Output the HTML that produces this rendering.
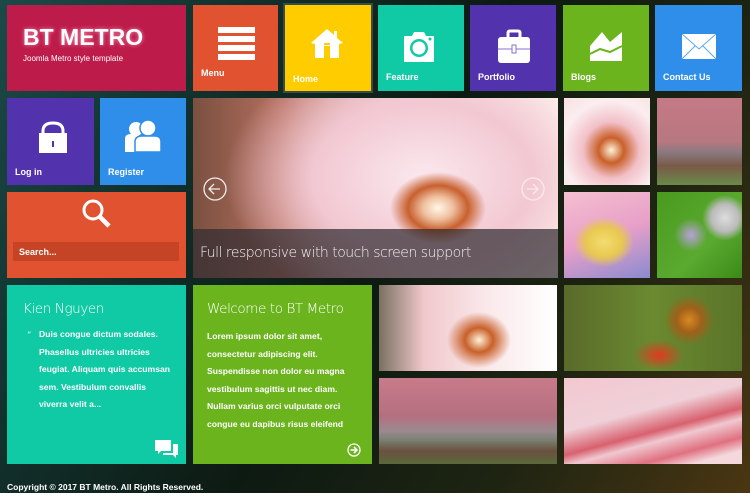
<!DOCTYPE html>
<html><head><meta charset="utf-8"><style>
*{margin:0;padding:0;box-sizing:border-box}
body{width:750px;height:493px;overflow:hidden;position:relative;font-family:"Liberation Sans",sans-serif;color:#fff;
background:linear-gradient(120deg,#1b4a48 0%,#12302c 25%,#0d1a12 50%,#1e2412 75%,#4a3612 100%)}
.t{position:absolute}
.lbl{position:absolute;left:8px;font-size:9px;font-weight:bold}
svg{position:absolute}
.ph{position:absolute}
p.b{font-size:8.6px;font-weight:bold;line-height:17.5px}
.ttl{position:absolute;top:16px;font-size:13.5px;font-family:'DejaVu Sans',sans-serif;font-weight:300;letter-spacing:-.4px}
</style></head><body>
<div class="t" style="left:7px;top:5px;width:179px;height:86px;background:#bd1b4a">
 <div style="position:absolute;left:16px;top:19px;font-size:23px;font-weight:bold;text-shadow:0 0 4px rgba(255,150,180,.9)">BT METRO</div>
 <div style="position:absolute;left:16px;top:49px;font-size:8px">Joomla Metro style template</div>
</div>
<div class="t" style="left:193px;top:5px;width:85px;height:86px;background:#e05230">
 <div style="position:absolute;left:25px;top:22px;width:37px;height:6px;background:#fff"></div>
 <div style="position:absolute;left:25px;top:31px;width:37px;height:6px;background:#fff"></div>
 <div style="position:absolute;left:25px;top:40px;width:37px;height:6px;background:#fff"></div>
 <div style="position:absolute;left:25px;top:49px;width:37px;height:6px;background:#fff"></div>
 <div class="lbl" style="top:63px">Menu</div>
</div>
<div class="t" style="left:283px;top:3px;width:90px;height:90px;border:2px solid #3a4a44;background:#ffcc00">
 <svg style="left:24px;top:22px" width="36" height="32" viewBox="0 0 36 32"><path d="M18 2 L2 16 L6 17 L6 31 L30 31 L30 17 L34 16 L28 11 L28 4 L25 4 L25 8 Z" fill="#fff"/><rect x="15" y="19" width="6" height="12" fill="#ffcc00"/><rect x="15" y="16" width="6" height="2" fill="#ffcc00"/></svg>
 <div class="lbl" style="top:69px">Home</div>
</div>
<div class="t" style="left:378px;top:5px;width:86px;height:86px;background:#10c9a5">
 <svg style="left:24px;top:25px" width="34" height="34" viewBox="0 0 34 34"><path d="M2 6 H10 L12 2 H22 L24 6 H32 V32 H2 Z" fill="#fff"/><circle cx="17" cy="18" r="9" fill="#10c9a5"/><circle cx="17" cy="18" r="6.5" fill="#fff"/><circle cx="28" cy="9" r="1.5" fill="#10c9a5"/></svg>
 <div class="lbl" style="top:67px">Feature</div>
</div>
<div class="t" style="left:470px;top:5px;width:86px;height:86px;background:#5233ad">
 <svg style="left:28px;top:22px" width="32" height="36" viewBox="0 0 32 36"><path d="M10 10 V6 Q10 4 12 4 H20 Q22 4 22 6 V10" stroke="#fff" stroke-width="3" fill="none"/><rect x="0" y="10" width="32" height="26" rx="3" fill="#fff"/><line x1="0" y1="22" x2="32" y2="22" stroke="#8a70d0" stroke-width="1"/><rect x="14" y="18" width="4" height="8" fill="#fff" stroke="#8a70d0"/></svg>
 <div class="lbl" style="top:67px">Portfolio</div>
</div>
<div class="t" style="left:563px;top:5px;width:86px;height:86px;background:#6bb41e">
 <svg style="left:27px;top:23px" width="34" height="34" viewBox="0 0 34 34"><path d="M0 18 L12 4 L20 14 L32 4 V33 H0 Z" fill="#fff"/><path d="M0 26 L10 21 L20 24 L32 18" stroke="#6bb41e" stroke-width="2" fill="none"/></svg>
 <div class="lbl" style="top:67px">Blogs</div>
</div>
<div class="t" style="left:655px;top:5px;width:87px;height:86px;background:#2e8eea">
 <svg style="left:27px;top:29px" width="34" height="25" viewBox="0 0 34 25"><rect width="34" height="25" fill="#fff"/><path d="M0 0 L17 15 L34 0 M0 25 L13 12 M34 25 L21 12" stroke="#5aa8f0" stroke-width="1" fill="none"/></svg>
 <div class="lbl" style="top:67px">Contact Us</div>
</div>
<div class="t" style="left:7px;top:98px;width:87px;height:87px;background:#5233ad">
 <svg style="left:30px;top:23px" width="32" height="32" viewBox="0 0 32 32"><path d="M6 12 V10 Q6 2 16 2 Q26 2 26 10 V12" stroke="#fff" stroke-width="3" fill="none"/><rect x="2" y="12" width="28" height="20" fill="#fff"/><rect x="15" y="20" width="2" height="6" fill="#5233ad"/></svg>
 <div class="lbl" style="top:69px">Log in</div>
</div>
<div class="t" style="left:100px;top:98px;width:86px;height:87px;background:#2e8eea">
 <svg style="left:25px;top:22px" width="36" height="34" viewBox="0 0 36 34"><circle cx="11" cy="9" r="7" fill="#fff"/><path d="M0 19 Q0 14 6 14 H14 V32 H0 Z" fill="#fff"/><circle cx="23" cy="8" r="8" fill="#fff" stroke="#2e8eea" stroke-width="1.5"/><path d="M10 32 V22 Q10 16 17 16 H30 Q36 16 36 22 V32 Z" fill="#fff" stroke="#2e8eea" stroke-width="1.5"/></svg>
 <div class="lbl" style="top:69px">Register</div>
</div>
<div class="t" style="left:7px;top:192px;width:179px;height:86px;background:#e05230">
 <svg style="left:74px;top:6px" width="32" height="32" viewBox="0 0 32 32"><circle cx="12" cy="12" r="9" stroke="#fff" stroke-width="3" fill="none"/><line x1="19" y1="19" x2="28" y2="28" stroke="#fff" stroke-width="4.5"/></svg>
 <div style="position:absolute;left:6px;top:50px;width:166px;height:19px;background:#c54425;font-size:9px;font-weight:bold;padding:5px 6px">Search...</div>
</div>
<div class="t" style="left:193px;top:98px;width:365px;height:180px;overflow:hidden;
background:radial-gradient(ellipse 60px 45px at 245px 110px,#fff8e8 0,#f0c0a0 25%,#c8602e 50%,rgba(240,190,200,0) 80%),radial-gradient(ellipse 220px 150px at 230px 80px,#fbe8ee 0,#f2c8d2 50%,rgba(200,120,110,0) 90%),linear-gradient(90deg,#7a5040,#b87060 25%,#f4d8dc 60%,#fff6f0)">
 <div style="position:absolute;left:0;top:131px;width:365px;height:49px;background:rgba(50,45,50,.72)"></div>
 <div style="position:absolute;left:7px;top:147px;font-size:14px;font-family:'DejaVu Sans',sans-serif;font-weight:300;color:#f0f0f0;letter-spacing:-.5px">Full responsive with touch screen support</div>
 <svg style="left:10px;top:79px" width="24" height="24" viewBox="0 0 24 24"><circle cx="12" cy="12" r="11" stroke="#eee" stroke-width="1.3" fill="none"/><path d="M17 12 H6 M11 7 L6 12 L11 17" stroke="#eee" stroke-width="1.3" fill="none"/></svg>
 <svg style="left:328px;top:79px" width="24" height="24" viewBox="0 0 24 24" opacity=".6"><circle cx="12" cy="12" r="11" stroke="#fff" stroke-width="1.3" fill="none"/><path d="M6 12 H17 M12 7 L17 12 L12 17" stroke="#fff" stroke-width="1.3" fill="none"/></svg>
</div>
<div class="ph" style="left:564px;top:98px;width:86px;height:87px;background:radial-gradient(circle at 55% 60%,#fff2d8 0,#c9602a 18%,#f2c0c8 40%,#fbeef0 70%,#f8e0e0)"></div>
<div class="ph" style="left:657px;top:98px;width:85px;height:87px;background:linear-gradient(180deg,#c47a86 0,#b87880 50%,#8a7a80 62%,#7a5a48 78%,#6a8a4a 100%)"></div>
<div class="ph" style="left:564px;top:192px;width:86px;height:86px;background:radial-gradient(ellipse 30px 25px at 40px 50px,#f4dc70 0,#e8c850 60%,rgba(240,200,220,0) 100%),linear-gradient(160deg,#f4c0d0,#e8a0c8 50%,#8a8ad0)"></div>
<div class="ph" style="left:657px;top:192px;width:85px;height:86px;background:radial-gradient(circle at 80% 30%,#ddd 0,#bbb 15%,rgba(0,0,0,0) 25%),radial-gradient(circle at 40% 50%,#b8a0d8 0,rgba(0,0,0,0) 25%),linear-gradient(135deg,#4a9a20,#5aaa30 60%,#3a8a18)"></div>
<div class="t" style="left:7px;top:285px;width:179px;height:179px;background:#10c9a5">
 <div class="ttl" style="left:16px">Kien Nguyen</div>
 <div style="position:absolute;left:20px;top:45px;font-size:9px;font-style:italic">"</div>
 <p class="b" style="position:absolute;left:32px;top:41px;width:134px">Duis congue dictum sodales. Phasellus ultricies ultricies feugiat. Aliquam quis accumsan sem. Vestibulum convallis viverra velit a...</p>
 <svg style="left:148px;top:155px" width="24" height="20" viewBox="0 0 24 20"><path d="M0 0 H16 V11 H6 L3 14 V11 H0 Z" fill="#fff"/><path d="M18 4 H23 V15 H21 V18 L18 15 H8 V13 H18 Z" fill="#fff"/></svg>
</div>
<div class="t" style="left:193px;top:285px;width:179px;height:179px;background:#6bb41e">
 <div class="ttl" style="left:14px">Welcome to BT Metro</div>
 <p class="b" style="position:absolute;left:14px;top:43px;width:150px">Lorem ipsum dolor sit amet, consectetur adipiscing elit. Suspendisse non dolor eu magna vestibulum sagittis ut nec diam. Nullam varius orci vulputate orci congue eu dapibus risus eleifend</p>
 <svg style="left:154px;top:158px" width="14" height="14" viewBox="0 0 14 14"><circle cx="7" cy="7" r="6" stroke="#fff" stroke-width="1.3" fill="none"/><path d="M3.5 7 H10 M7 4 L10 7 L7 10" stroke="#fff" stroke-width="1.6" fill="none"/></svg>
</div>
<div class="ph" style="left:379px;top:285px;width:178px;height:86px;background:radial-gradient(ellipse 40px 35px at 100px 55px,#fff2d8 0,#c9602a 35%,rgba(240,190,200,0) 80%),linear-gradient(90deg,#7a7060,#f0c8cc 25%,#fae8ea 60%,#fff)"></div>
<div class="ph" style="left:379px;top:378px;width:178px;height:86px;background:linear-gradient(180deg,#c87a8a 0,#b47080 45%,#9a8a90 62%,#7a8070 72%,#6a5040 85%,#5a6a3a 100%)"></div>
<div class="ph" style="left:564px;top:285px;width:178px;height:86px;background:radial-gradient(ellipse 25px 25px at 125px 35px,#d88a20 0,#a0601a 50%,rgba(0,0,0,0) 100%),radial-gradient(ellipse 25px 15px at 95px 70px,#e03a20 0,rgba(0,0,0,0) 100%),linear-gradient(90deg,#5a6a2a,#6a8a30 50%,#5a7428)"></div>
<div class="ph" style="left:564px;top:378px;width:178px;height:86px;background:linear-gradient(165deg,#f2c8d0 0,#f0d0d8 40%,#d8606e 58%,#f0c8d0 66%,#e07080 80%,#f4d8dc 90%),#fff"></div>
<div style="position:absolute;left:7px;top:482px;font-size:8.5px;font-weight:bold">Copyright © 2017 BT Metro. All Rights Reserved.</div>
</body></html>
